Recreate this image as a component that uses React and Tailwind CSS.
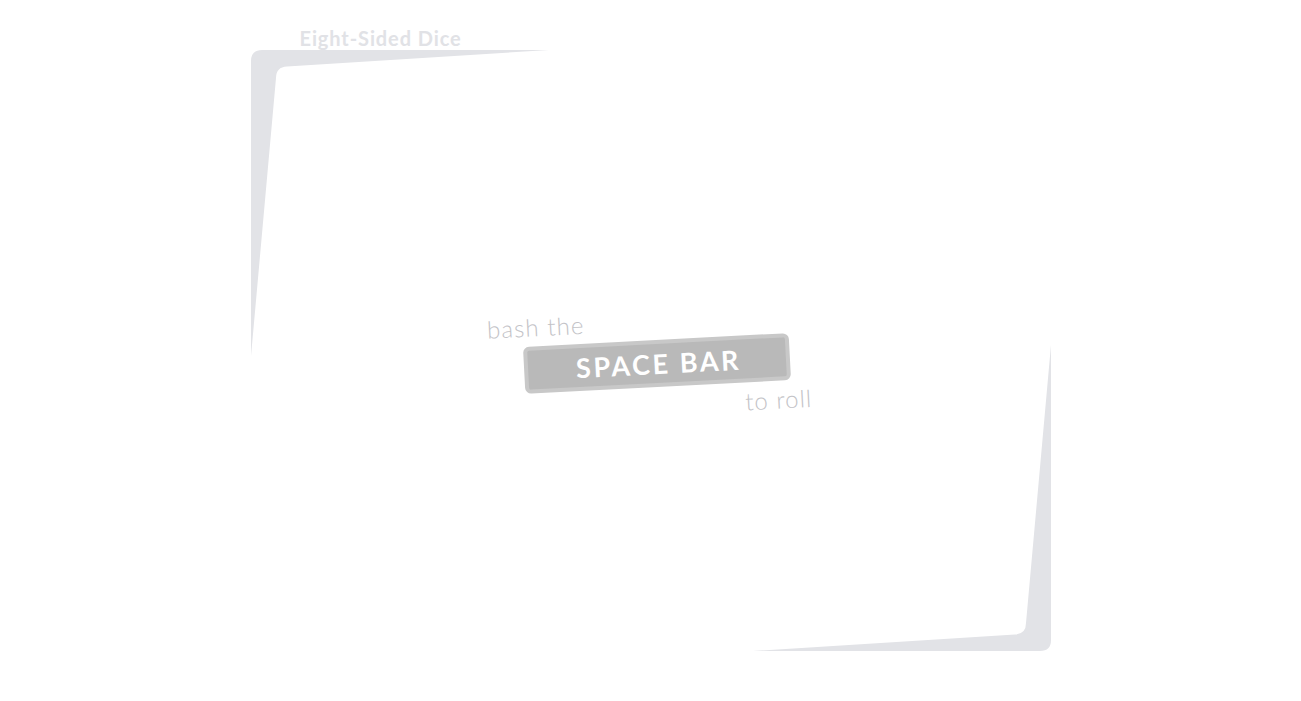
import React from 'react';

// bracket in the top-left corner; the bottom-right one is the same shape turned round
const BRACKET = 'M0 306 L0 11 Q0 0 11 0 L298 0 L36 16.5 Q25 17 25 28 Z';

export default function App() {
  return (
    <div className="min-h-screen bg-white" style={{ fontFamily: 'Lato, "Open Sans", sans-serif' }}>
      <div className="mx-auto w-[800px] pt-[26px]">
        {/* Title */}
        <h1 className="ml-[49px] h-[24px] text-[20px] font-bold leading-[24px] tracking-[0.9px] text-[#e1e2e6]">
          Eight-Sided Dice
        </h1>

        {/* Board */}
        <div className="relative flex h-[601px] items-center justify-center pl-[12px] pt-[25px]">
          <svg className="absolute inset-0" width="800" height="601" viewBox="0 0 800 601">
            <path d={BRACKET} fill="#e2e3e7" />
            <path d={BRACKET} fill="#e2e3e7" transform="rotate(180 400 300.5)" />
          </svg>

          <div className="flex -rotate-3 flex-col">
            <span className="-ml-[35px] self-start text-[24px] font-light leading-[26px] tracking-[1.1px] text-[#c3c3c7]">
              bash the
            </span>
            <div className="mt-[6px] flex h-[47px] w-[266px] items-center justify-center rounded-[6px] border-4 border-[#c8c8c8] bg-[#b9b9b9]">
              <span className="pl-[3px] text-[27px] font-bold leading-none tracking-[2.6px] text-white">SPACE BAR</span>
            </div>
            <span className="-mr-[20px] mt-[6px] self-end text-[24px] font-light leading-[26px] tracking-[1px] text-[#c3c3c7]">
              to roll
            </span>
          </div>
        </div>
      </div>
    </div>
  );
}
